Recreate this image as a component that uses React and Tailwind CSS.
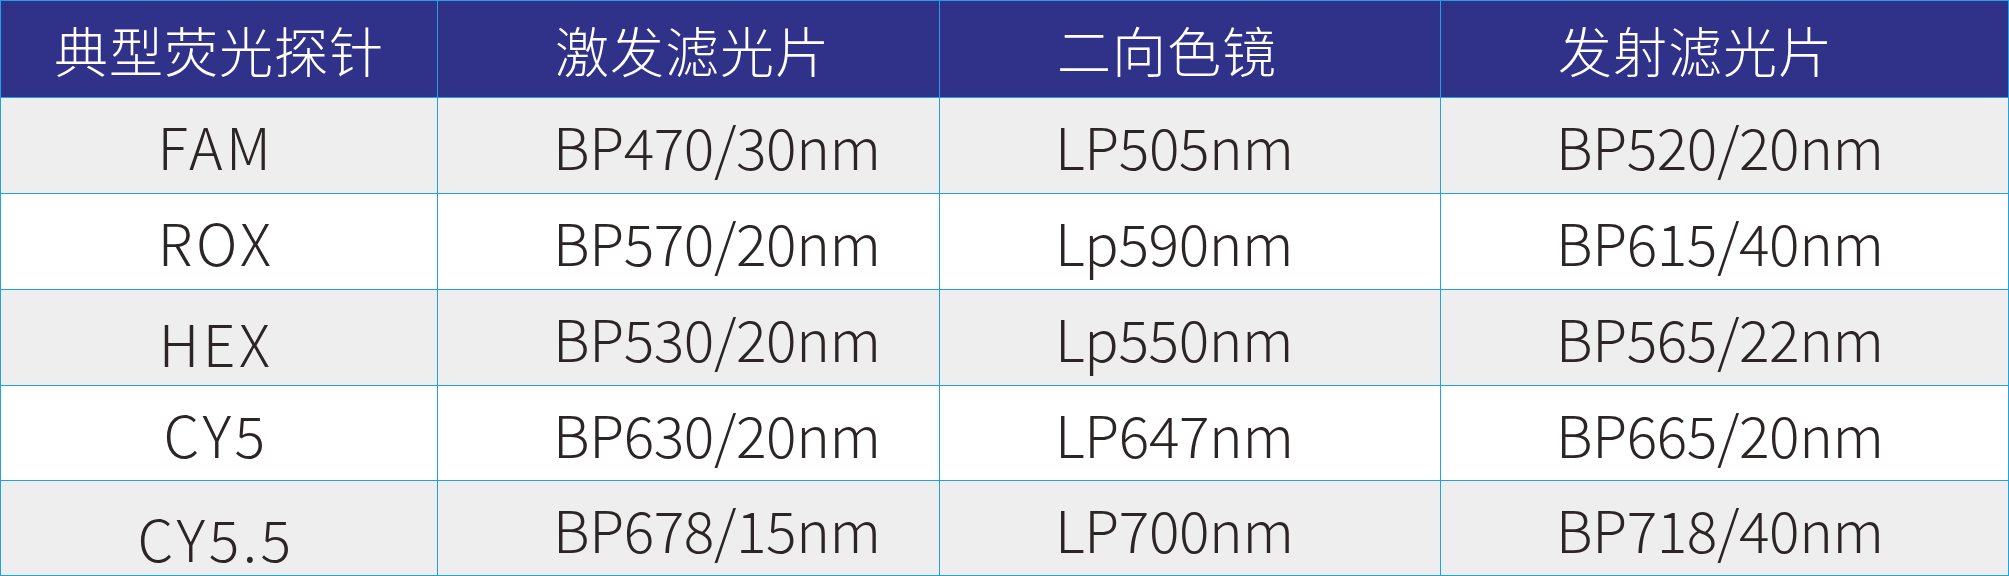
const font = { fontFamily: '"Noto Sans CJK SC", "Noto Sans", sans-serif' }

const headers = ['典型荧光探针', '激发滤光片', '二向色镜', '发射滤光片']

const rows = [
  { probe: 'FAM', ex: 'BP470/30nm', di: 'LP505nm', em: 'BP520/20nm', shift: '' },
  { probe: 'ROX', ex: 'BP570/20nm', di: 'Lp590nm', em: 'BP615/40nm', shift: '' },
  { probe: 'HEX', ex: 'BP530/20nm', di: 'Lp550nm', em: 'BP565/22nm', shift: 'pt-[10px]' },
  { probe: 'CY5', ex: 'BP630/20nm', di: 'LP647nm', em: 'BP665/20nm', shift: '' },
  { probe: 'CY5.5', ex: 'BP678/15nm', di: 'LP700nm', em: 'BP718/40nm', shift: 'pt-[18px]' },
]

export default function App() {
  return (
    <div className="w-[2009px] h-[576px] bg-white" style={font}>
      <div className="grid grid-cols-[436px_501px_500px_567px] grid-rows-[96px_95px_95px_95px_94px_94px] gap-px p-px bg-[#1ea2e4] h-full">
        {headers.map((h, i) => (
          <div
            key={h}
            className={`bg-[#303189] flex items-center text-white text-[54px] font-extralight tracking-[1px] ${i === 0 ? 'pl-[53px]' : 'pl-[117px]'}`}
          >
            {h}
          </div>
        ))}
        {rows.map((r, ri) => {
          const bg = ri % 2 === 0 ? 'bg-[#eeeeee]' : 'bg-white'
          return [
            <div key={r.probe} className={`${bg} flex items-center justify-center pr-[6px] text-[#2b2525] text-[57px] leading-none font-light tracking-[3.5px] ${r.shift}`}>
              {r.probe}
            </div>,
            ...[r.ex, r.di, r.em].map((t, ci) => (
              <div key={r.probe + ci} className={`${bg} flex items-center pl-[115px] text-[#2b2525] text-[57px] leading-none font-light tracking-[-0.4px]`}>
                {t}
              </div>
            )),
          ]
        })}
      </div>
    </div>
  )
}
